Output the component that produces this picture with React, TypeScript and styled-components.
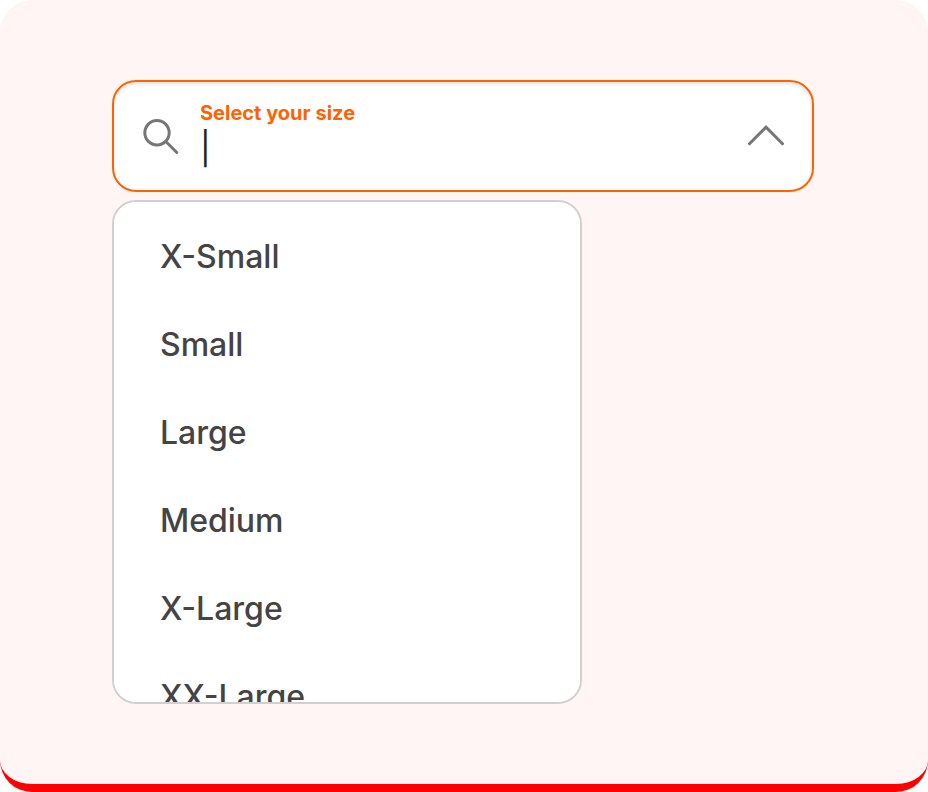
import React, { useState } from "react";
import styled, { createGlobalStyle } from "styled-components";

const GlobalStyle = createGlobalStyle`
  *, *::before, *::after { box-sizing: border-box; }
  body {
    margin: 0;
    background: #ffffff;
    font-family: Inter, "Liberation Sans", sans-serif;
  }
`;

const Page = styled.main`
  min-height: 100vh;
  padding: 80px 112px;
  background: #fff5f4;
  border-bottom: 8px solid #ff0000;
  border-radius: 32px;
`;

const Combobox = styled.div`
  display: flex;
  flex-direction: column;
  gap: 8px;
  max-width: 702px;
`;

const Field = styled.div`
  display: flex;
  align-items: center;
  gap: 20px;
  height: 112px;
  padding: 0 28px;
  background: #ffffff;
  border: 2px solid #ff6200;
  border-radius: 24px;
  box-shadow: inset 0 2px 4px rgba(0, 0, 0, 0.12);
`;

const SearchIcon = styled.svg`
  flex: none;
  width: 38px;
  height: 38px;
`;

const Content = styled.div`
  flex: 1;
  min-width: 0;
  display: flex;
  flex-direction: column;
  gap: 2px;
`;

const Label = styled.label`
  font-size: 20px;
  line-height: 24px;
  font-weight: 700;
  color: #ff6200;
`;

const Entry = styled.div`
  display: flex;
  align-items: center;
  height: 44px;
  font-size: 32px;
  line-height: 44px;
  color: #222222;
`;

const Caret = styled.span`
  flex: none;
`;

const TextInput = styled.input`
  flex: 1;
  min-width: 0;
  height: 44px;
  padding: 0;
  border: 0;
  outline: 0;
  background: transparent;
  color: inherit;
  font: inherit;
`;

const Toggle = styled.button`
  flex: none;
  display: flex;
  padding: 0;
  border: 0;
  background: transparent;
  cursor: pointer;
`;

const Options = styled.ul`
  max-width: 470px;
  height: 504px;
  margin: 0;
  padding: 11px 0;
  overflow-y: auto;
  scrollbar-width: none;
  list-style: none;
  background: #ffffff;
  border: 2px solid #d0d0d0;
  border-radius: 24px;
`;

const Option = styled.li`
  padding: 0 46px;
  font-size: 32px;
  font-weight: 450;
  line-height: 88px;
  color: #444444;
  cursor: pointer;
`;

const SIZES = ["X-Small", "Small", "Large", "Medium", "X-Large", "XX-Large"];

export default function App() {
  const [open, setOpen] = useState(true);
  const [value, setValue] = useState("");

  return (
    <>
      <GlobalStyle />
      <Page>
        <Combobox>
          <Field>
            <SearchIcon viewBox="0 0 38 38" fill="none" stroke="#767676" strokeWidth="3" aria-hidden="true">
              <circle cx="15" cy="15.7" r="12.2" />
              <path d="M23.8 24.5L34.8 35.5" strokeLinecap="round" />
            </SearchIcon>
            <Content>
              <Label htmlFor="size">Select your size</Label>
              <Entry>
                {value === "" && <Caret aria-hidden="true">|</Caret>}
                <TextInput
                  id="size"
                  role="combobox"
                  aria-expanded={open}
                  aria-controls="size-options"
                  autoComplete="off"
                  value={value}
                  onChange={(event) => setValue(event.target.value)}
                />
              </Entry>
            </Content>
            <Toggle type="button" aria-label="Toggle size options" onClick={() => setOpen(!open)}>
              <svg width="36" height="22" viewBox="0 0 36 22" fill="none" stroke="#767676" strokeWidth="3" strokeLinecap="round" aria-hidden="true">
                <path d="M1.5 18.8L18 2.2L34.5 18.8" />
              </svg>
            </Toggle>
          </Field>
          {open && (
            <Options id="size-options" role="listbox" aria-label="Select your size">
              {SIZES.map((size) => (
                <Option key={size} role="option" aria-selected={size === value} onClick={() => setValue(size)}>
                  {size}
                </Option>
              ))}
            </Options>
          )}
        </Combobox>
      </Page>
    </>
  );
}
